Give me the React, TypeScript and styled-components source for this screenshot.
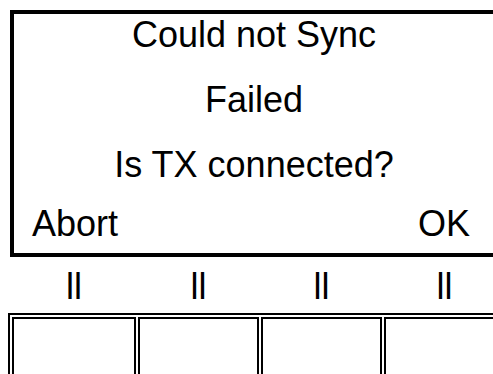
import styled, { createGlobalStyle } from "styled-components";

const GlobalStyle = createGlobalStyle`
    html, body {
        margin: 0;
        padding: 0;
        background: #fff;
        overflow: hidden;
    }
    body {
        font-family: "Liberation Sans", Arial, sans-serif;
        color: #000;
    }
`;

const columns = [124, 121, 121, 121];

const Page = styled.div`
    width: 560px;
    padding: 10px 0 0 8px;
`;

const Dialog = styled.div`
    margin-left: 2px;
    width: 480px;
    padding-right: 40px;
    border: 4px solid #000;
    font-size: 36px;
    line-height: 41px;
`;

const Line = styled.div<{ gap: number }>`
    text-align: center;
    margin-bottom: ${(props) => props.gap}px;
`;

const Actions = styled.div`
    display: flex;
    justify-content: space-between;
    padding: 0 24px 0 18px;
    margin-bottom: 9px;
`;

const Labels = styled.div`
    display: flex;
    gap: 2px;
    padding-left: 4px;
    margin-top: 9px;
    font-size: 36px;
    line-height: 41px;
`;

const Label = styled.div<{ w: number }>`
    width: ${(props) => props.w}px;
    text-align: center;
`;

const Frame = styled.div`
    display: inline-flex;
    gap: 2px;
    margin-top: 6px;
    padding: 2px;
    border: 2px solid #000;
`;

const Cell = styled.div<{ w: number }>`
    box-sizing: border-box;
    width: ${(props) => props.w}px;
    height: 80px;
    border: 2px solid #000;
`;

function App() {
    return (
        <>
            <GlobalStyle />
            <Page>
                <Dialog>
                    <Line gap={24}>Could not Sync</Line>
                    <Line gap={24}>Failed</Line>
                    <Line gap={18}>Is TX connected?</Line>
                    <Actions>
                        <span>Abort</span>
                        <span>OK</span>
                    </Actions>
                </Dialog>
                <Labels>
                    {columns.map((w, i) => (
                        <Label key={i} w={w}>ll</Label>
                    ))}
                </Labels>
                <Frame>
                    {columns.map((w, i) => (
                        <Cell key={i} w={w} />
                    ))}
                </Frame>
            </Page>
        </>
    );
}

export default App;
